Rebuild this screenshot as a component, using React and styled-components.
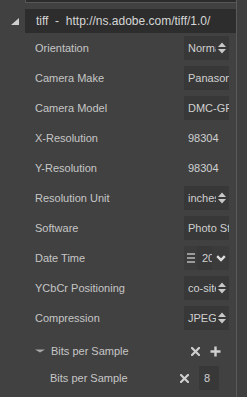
import React from "react";
import styled, { createGlobalStyle } from "styled-components";

const Global = createGlobalStyle`
  html, body { margin: 0; padding: 0; background: #414141; }
  body { font-family: "Liberation Sans", Arial, sans-serif; }
`;

const Page = styled.div`
  display: flex;
  width: 247px;
  height: 397px;
  overflow: hidden;
  background: #414141;
`;

const Main = styled.div`
  width: 236px;
  display: flex;
  flex-direction: column;
`;

const Divider = styled.div`
  width: 1px;
  background: #5a5a5a;
`;

const Rest = styled.div`
  flex: 1;
  background: #3f3f3f;
`;

const TopStrip = styled.div`
  margin-left: 25px;
  height: 2px;
  background: #2c2c2c;
  border: 1px solid #575757;
  border-top: none;
  border-right: none;
`;

const SectionHeader = styled.div`
  margin-top: 6px;
  height: 24px;
  display: flex;
`;

const Toggle = styled.div`
  width: 25px;
  display: flex;
`;

const HeaderBox = styled.div`
  flex: 1;
  background: #2d2d2d;
  color: #d6d6d6;
  font-size: 12px;
  line-height: 24px;
  padding-left: 11px;
  white-space: pre;
`;

const Row = styled.div`
  height: 30px;
  display: flex;
  align-items: center;
  padding-left: 35px;
  padding-right: 7px;
  font-size: 11px;
  color: #c6c6c6;
`;

const Label = styled.div`
  flex: 1;
  white-space: nowrap;
`;

const Box = styled.div`
  width: 45px;
  height: 24px;
  box-sizing: border-box;
  background: ${(p) => (p.$plain ? "transparent" : "#383838")};
  display: flex;
  align-items: center;
  overflow: hidden;
  color: #d0d0d0;
  font-size: 11px;
`;

const BoxText = styled.div`
  flex: 1;
  min-width: 0;
  overflow: hidden;
  white-space: nowrap;
  padding-left: ${(p) => p.$pad ?? 4}px;
`;

const Spinner = styled.svg`
  width: 8px;
  height: 12px;
  margin: 0 3px 0 2px;
  flex: none;
`;

const HandleSeg = styled.div`
  width: 13px;
  height: 100%;
  background: #3b3b3b;
  display: flex;
  flex-direction: column;
  justify-content: center;
  align-items: center;
  gap: 2px;
  flex: none;
`;

const Bar = styled.div`
  width: 8px;
  height: 2px;
  background: #9a9a9a;
`;

const ChevronSeg = styled.div`
  width: 17px;
  height: 100%;
  background: #3b3b3b;
  display: flex;
  align-items: center;
  justify-content: center;
  flex: none;
`;

const GroupRow = styled.div`
  margin-top: 3px;
  height: 30px;
  display: flex;
  align-items: center;
  padding-left: 35px;
  padding-right: 15px;
  font-size: 11px;
  color: #c6c6c6;
`;

const GroupLabel = styled.div`
  flex: 1;
  margin-left: 6px;
  white-space: nowrap;
`;

const Icons = styled.div`
  display: flex;
  align-items: center;
  gap: ${(p) => p.$gap}px;
`;

const ChildRow = styled.div`
  height: 24px;
  display: flex;
  align-items: center;
  padding-left: 50px;
  padding-right: 17px;
  font-size: 11px;
  color: #c6c6c6;
`;

const SmallBox = styled.div`
  width: 20px;
  height: 24px;
  background: #383838;
  color: #d0d0d0;
  font-size: 11px;
  line-height: 24px;
  padding-left: 5px;
  box-sizing: border-box;
`;

const SpinIcon = () => (
  <Spinner viewBox="0 0 8 12">
    <polygon points="0,5 4,0.5 8,5" fill="#c8c8c8" />
    <polygon points="0,7 8,7 4,11.5" fill="#c8c8c8" />
  </Spinner>
);

const XIcon = ({ size = 9 }) => (
  <svg width={size} height={size} viewBox="0 0 9 9">
    <path d="M1,1 L8,8 M8,1 L1,8" stroke="#cfcfcf" strokeWidth="2.2" strokeLinecap="square" />
  </svg>
);

const PlusIcon = () => (
  <svg width="11" height="11" viewBox="0 0 11 11">
    <path d="M5.5,0.5 V10.5 M0.5,5.5 H10.5" stroke="#cfcfcf" strokeWidth="2.4" />
  </svg>
);

const rows = [
  { label: "Orientation", value: "Normal", kind: "select" },
  { label: "Camera Make", value: "Panasonic", kind: "text" },
  { label: "Camera Model", value: "DMC-GF1", kind: "text" },
  { label: "X-Resolution", value: "98304", kind: "plain" },
  { label: "Y-Resolution", value: "98304", kind: "plain" },
  { label: "Resolution Unit", value: "inches", kind: "select" },
  { label: "Software", value: "Photo Studio", kind: "text" },
  { label: "Date Time", value: "2010:05:12", kind: "date" },
  { label: "YCbCr Positioning", value: "co-sited", kind: "select" },
  { label: "Compression", value: "JPEG", kind: "select" },
];

const Control = ({ kind, value }) => {
  if (kind === "select")
    return (
      <Box>
        <BoxText>{value}</BoxText>
        <SpinIcon />
      </Box>
    );
  if (kind === "date")
    return (
      <Box>
        <HandleSeg>
          <Bar />
          <Bar />
          <Bar />
        </HandleSeg>
        <BoxText $pad={5}>{value}</BoxText>
        <ChevronSeg>
          <svg width="10" height="7" viewBox="0 0 10 7">
            <polyline points="1.2,1.2 5,5 8.8,1.2" fill="none" stroke="#e0e0e0" strokeWidth="2.4" />
          </svg>
        </ChevronSeg>
      </Box>
    );
  return (
    <Box $plain={kind === "plain"}>
      <BoxText>{value}</BoxText>
    </Box>
  );
};

export default function App() {
  return (
    <>
      <Global />
      <Page>
        <Main>
          <TopStrip />
          <SectionHeader>
            <Toggle>
              <svg width="25" height="24" viewBox="0 0 25 24">
                <polygon points="11,16 19,9 19,16" fill="#cfcfcf" />
              </svg>
            </Toggle>
            <HeaderBox>{"tiff  -  http://ns.adobe.com/tiff/1.0/"}</HeaderBox>
          </SectionHeader>
          {rows.map((r) => (
            <Row key={r.label}>
              <Label>{r.label}</Label>
              <Control kind={r.kind} value={r.value} />
            </Row>
          ))}
          <GroupRow>
            <svg width="10" height="4" viewBox="0 0 10 4">
              <polygon points="0,0.5 10,0.5 5,3.5" fill="#a8a8a8" />
            </svg>
            <GroupLabel>Bits per Sample</GroupLabel>
            <Icons $gap={10}>
              <XIcon />
              <PlusIcon />
            </Icons>
          </GroupRow>
          <ChildRow>
            <Label>Bits per Sample</Label>
            <Icons $gap={10}>
              <XIcon />
              <SmallBox>8</SmallBox>
            </Icons>
          </ChildRow>
        </Main>
        <Divider />
        <Rest />
      </Page>
    </>
  );
}
